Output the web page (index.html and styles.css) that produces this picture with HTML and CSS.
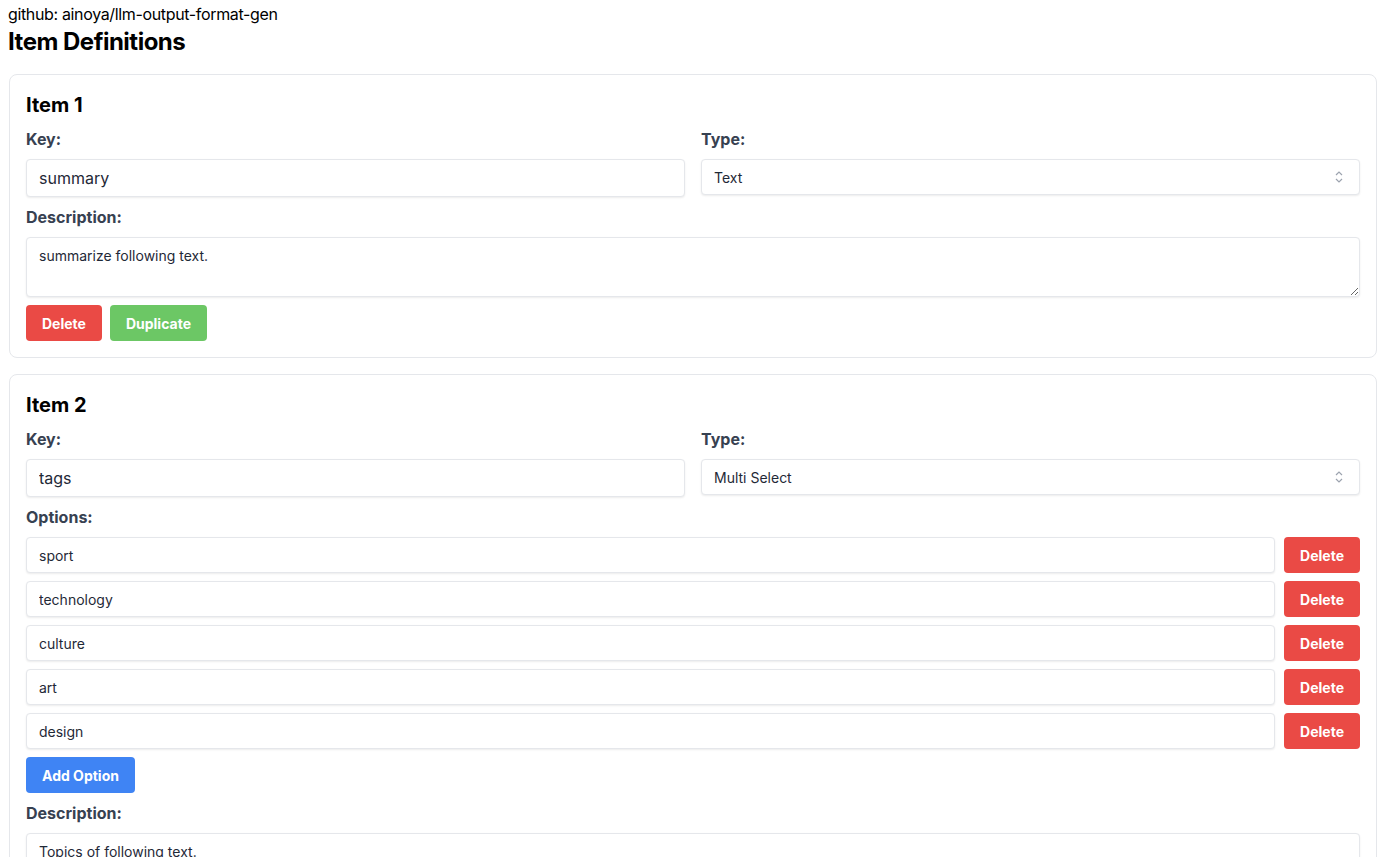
FILE: index.html
```html
<!DOCTYPE html>
<html>
<head>
    <meta charset="UTF-8">
    <title>LLM Output Format Generator</title>
    <link rel="stylesheet" href="styles.css">
</head>
<body>
    <div class="repo">github: ainoya/llm-output-format-gen</div>
    <h2 class="page-title">Item Definitions</h2>

    <div class="item-card">
        <h3 class="item-title">Item 1</h3>
        <div class="row">
            <div class="field">
                <label>Key:</label>
                <input type="text" class="key-input" value="summary">
            </div>
            <div class="field">
                <label>Type:</label>
                <div class="select-wrap">
                    <select>
                        <option selected>Text</option>
                        <option>Select</option>
                        <option>Multi Select</option>
                    </select>
                    <svg class="chevron" width="10" height="14" viewBox="0 0 10 14"><path d="M2 5 L5 2 L8 5 M2 9 L5 12 L8 9" fill="none" stroke="#9ca3af" stroke-width="1.2"/></svg>
                </div>
            </div>
        </div>
        <label>Description:</label>
        <textarea rows="2">summarize following text.</textarea>
        <div class="actions">
            <button class="btn btn-red">Delete</button>
            <button class="btn btn-green">Duplicate</button>
        </div>
    </div>

    <div class="item-card">
        <h3 class="item-title">Item 2</h3>
        <div class="row">
            <div class="field">
                <label>Key:</label>
                <input type="text" class="key-input" value="tags">
            </div>
            <div class="field">
                <label>Type:</label>
                <div class="select-wrap">
                    <select>
                        <option>Text</option>
                        <option>Select</option>
                        <option selected>Multi Select</option>
                    </select>
                    <svg class="chevron" width="10" height="14" viewBox="0 0 10 14"><path d="M2 5 L5 2 L8 5 M2 9 L5 12 L8 9" fill="none" stroke="#9ca3af" stroke-width="1.2"/></svg>
                </div>
            </div>
        </div>
        <label>Options:</label>
        <div class="options">
            <div class="option-row"><input type="text" class="option-input" value="sport"><button class="btn btn-red">Delete</button></div>
            <div class="option-row"><input type="text" class="option-input" value="technology"><button class="btn btn-red">Delete</button></div>
            <div class="option-row"><input type="text" class="option-input" value="culture"><button class="btn btn-red">Delete</button></div>
            <div class="option-row"><input type="text" class="option-input" value="art"><button class="btn btn-red">Delete</button></div>
            <div class="option-row"><input type="text" class="option-input" value="design"><button class="btn btn-red">Delete</button></div>
        </div>
        <button class="btn btn-blue add-option">Add Option</button>
        <label>Description:</label>
        <textarea rows="2">Topics of following text.</textarea>
        <div class="actions">
            <button class="btn btn-red">Delete</button>
            <button class="btn btn-green">Duplicate</button>
        </div>
    </div>
</body>
</html>
```

FILE: styles.css
```css
* {
    box-sizing: border-box;
}

body {
    margin: 0;
    padding: 2px 8px 16px 8px;
    font-family: Inter, "Noto Sans", sans-serif;
    color: #111827;
    background: #fff;
}

.repo {
    font-size: 16px;
    line-height: 24px;
    color: #000;
    letter-spacing: -0.35px;
}

.page-title {
    font-size: 24px;
    line-height: 32px;
    font-weight: 700;
    color: #000;
    letter-spacing: -0.5px;
    margin: 0 0 16px 0;
}

.item-card {
    border: 1px solid #e5e7eb;
    border-radius: 8px;
    padding: 16px;
    margin: 0 2px 16px 1px;
}

.item-title {
    font-size: 20px;
    line-height: 28px;
    font-weight: 700;
    color: #000;
    margin: 0 0 8px 0;
}

.row {
    display: grid;
    grid-template-columns: 1fr 1fr;
    gap: 16px;
    align-items: start;
}

label {
    display: block;
    font-size: 16px;
    line-height: 24px;
    font-weight: 700;
    color: #374151;
    margin: 0 0 8px 0;
}

.field {
    margin-bottom: 8px;
}

input[type="text"],
select,
textarea {
    display: block;
    width: 100%;
    font-family: inherit;
    color: #1f2937;
    background: #fff;
    border: 1px solid #e5e7eb;
    border-radius: 4px;
    box-shadow: 0 1px 2px rgba(0,0,0,0.08);
    outline: none;
}

.key-input {
    height: 38px;
    padding: 6px 12px;
    font-size: 16px;
}

.select-wrap {
    position: relative;
}

select {
    appearance: none;
    -webkit-appearance: none;
    height: 36px;
    padding: 0 12px;
    font-size: 14px;
}

.chevron {
    position: absolute;
    right: 16px;
    top: 11px;
    pointer-events: none;
}

textarea {
    height: 60px;
    padding: 8px 12px;
    font-size: 14px;
    line-height: 20px;
    resize: vertical;
}

.actions {
    display: flex;
    gap: 8px;
    margin-top: 8px;
}

.btn {
    height: 36px;
    padding: 0 16px;
    border: none;
    border-radius: 4px;
    font-family: inherit;
    font-size: 14px;
    font-weight: 700;
    color: #fff;
    cursor: pointer;
}

.btn-red {
    background: #ea4a45;
}

.btn-green {
    background: #6cc765;
}

.btn-blue {
    background: #3f84f4;
}

.options {
    display: flex;
    flex-direction: column;
    gap: 8px;
}

.option-row {
    display: flex;
    gap: 9px;
}

.option-input {
    flex: 1;
    height: 36px;
    padding: 0 12px;
    font-size: 14px;
}

.add-option {
    margin: 8px 0 8px 0;
}
```
